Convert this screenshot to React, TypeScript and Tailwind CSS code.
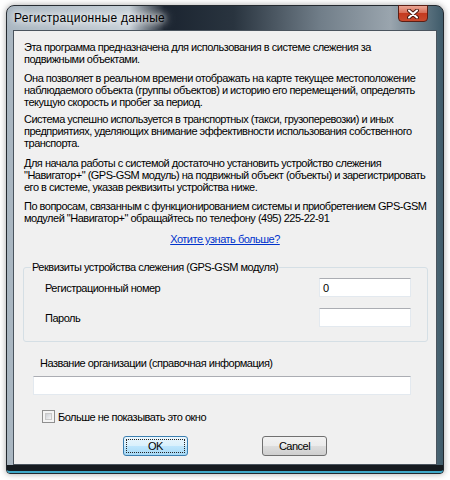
import React from 'react';

const para = [
    ['Эта программа предназначена для использования в системе слежения за', 'подвижными объектами.'],
    [
        'Она позволяет в реальном времени отображать на карте текущее местоположение',
        'наблюдаемого объекта (группы объектов) и историю его перемещений, определять',
        'текущую скорость и пробег за период.',
    ],
    [
        'Система успешно используется в транспортных (такси, грузоперевозки) и иных',
        'предприятиях, уделяющих внимание эффективности использования собственного',
        'транспорта.',
    ],
    [
        'Для начала работы с системой достаточно установить устройство слежения',
        '"Навигатор+" (GPS-GSM модуль) на подвижный объект (объекты) и зарегистрировать',
        'его в системе, указав реквизиты устройства ниже.',
    ],
    [
        'По вопросам, связанным с функционированием системы и приобретением GPS-GSM',
        'модулей "Навигатор+" обращайтесь по телефону (495) 225-22-91',
    ],
];

// gaps above each paragraph, the dialog uses fixed label positions
const paraGaps = ['mt-[10px]', 'mt-[7px]', 'mt-[5px]', 'mt-[8px]', 'mt-[7px]'];

function TextBox({ value, className }: { value?: string; className: string }) {
    return (
        <div
            className={`h-[19px] bg-white border border-[#e3e9ef] border-t-[#abadb3] flex items-center pl-[3px] text-[11px] text-black ${className}`}
        >
            {value}
        </div>
    );
}

function VistaButton({ label, isDefault }: { label: string; isDefault?: boolean }) {
    return (
        <div
            className={`w-[65px] h-[20px] rounded-[3px] border flex items-center justify-center p-[2px] ${
                isDefault
                    ? 'border-[#3c7fb1] bg-[linear-gradient(180deg,#eaf6fd_0%,#d9f0fc_50%,#bee6fd_51%,#a7d9f5_100%)]'
                    : 'border-[#707070] bg-[linear-gradient(180deg,#f2f2f2_0%,#ebebeb_50%,#dddddd_51%,#cfcfcf_100%)]'
            }`}
        >
            <div
                className={`w-full h-full flex items-center justify-center text-[11px] text-black ${
                    isDefault ? 'border border-dotted border-[#222]' : ''
                }`}
            >
                {label}
            </div>
        </div>
    );
}

export default function App() {
    return (
        <div className="w-[450px] h-[480px] bg-white pt-[5px] pl-[6px] font-['Liberation_Sans',Arial,sans-serif]">
            {/* Window frame */}
            <div className="w-[438px] h-[469px] rounded-t-[8px] rounded-b-[4px] border border-[#23292f] shadow-[0_0_6px_rgba(0,0,0,0.35)] flex flex-col bg-[linear-gradient(90deg,#a9b6c1_0%,#c4ced6_28%,#1b2430_36%,#29343f_52%,#717e89_72%,#9aa5ae_88%,#3f5b6a_100%)]">
                {/* Title bar */}
                <div className="h-[24px] flex items-start justify-between pl-[7px] pr-[15px]">
                    <span className="mt-[5px] text-[12px] leading-[14px] tracking-[0.3px] text-black [text-shadow:0_0_6px_#fff,0_0_10px_#fff,0_0_14px_rgba(255,255,255,0.9)]">
                        Регистрационные данные
                    </span>
                    <div className="w-[30px] h-[17px] mt-[-1px] rounded-b-[4px] border border-[#5b1f15] bg-[linear-gradient(180deg,#eaa695_0%,#d86e57_45%,#c53a1f_50%,#c84a2e_100%)] flex items-center justify-center">
                        <svg width="12" height="10" viewBox="0 0 12 10">
                            <path d="M2 1.5L10 8.5M10 1.5L2 8.5" stroke="#4a1a12" strokeWidth="4" strokeLinecap="round" />
                            <path d="M2 1.5L10 8.5M10 1.5L2 8.5" stroke="#ffffff" strokeWidth="2" strokeLinecap="round" />
                        </svg>
                    </div>
                </div>

                {/* Client area */}
                <div className="ml-[6px] w-[424px] h-[435px] border border-[#4a545e] bg-[#f0f0f0] flex flex-col text-[11px] leading-[12px] tracking-[-0.5px] text-black">
                    {para.map((lines, i) => (
                        <p key={i} className={`ml-[10px] ${paraGaps[i]}`}>
                            {lines.map((l, j) => (
                                <span key={j} className="block whitespace-nowrap">
                                    {l}
                                </span>
                            ))}
                        </p>
                    ))}

                    <div className="mt-[9px] text-center">
                        <span className="text-[#0033cc] underline">Хотите узнать больше?</span>
                    </div>

                    {/* Device group box */}
                    <fieldset className="mt-[16px] ml-[9px] w-[405px] border border-[#d5dfe5] rounded-[3px]">
                        <legend className="ml-[7px] px-[1px] leading-[12px]">
                            Реквизиты устройства слежения (GPS-GSM модуля)
                        </legend>
                        <div className="pt-[5px] pb-[14px] pl-[21px] pr-[16px] flex flex-col gap-[11px]">
                            <div className="flex items-center justify-between h-[19px]">
                                <span>Регистрационный номер</span>
                                <TextBox value="0" className="w-[92px]" />
                            </div>
                            <div className="flex items-center justify-between h-[19px]">
                                <span>Пароль</span>
                                <TextBox className="w-[92px]" />
                            </div>
                        </div>
                    </fieldset>

                    <div className="mt-[15px] ml-[26px]">Название организации (справочная информация)</div>
                    <TextBox className="mt-[7px] ml-[19px] w-[378px]" />

                    <div className="mt-[15px] ml-[28px] flex items-center gap-[3px] h-[13px]">
                        <div className="w-[13px] h-[13px] border border-[#8f8f8f] bg-[#f4f4f4] p-[2px]">
                            <div className="w-full h-full border border-[#c9c9c9] bg-[linear-gradient(135deg,#cbcfd5_0%,#f6f6f6_100%)]" />
                        </div>
                        <span>Больше не показывать это окно</span>
                    </div>

                    <div className="mt-[13px] ml-[109px] flex gap-[74px]">
                        <VistaButton label="OK" isDefault />
                        <VistaButton label="Cancel" />
                    </div>
                </div>

                {/* Bottom border */}
                <div className="mt-auto h-[8px] bg-[#161b20] border-b-2 border-[#3fa9c9] rounded-b-[3px]" />
            </div>
        </div>
    );
}
